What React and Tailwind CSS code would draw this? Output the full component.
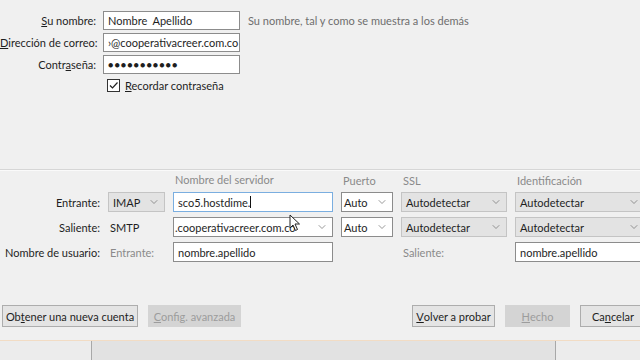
import { ChevronDown } from "lucide-react";

function Chev() {
  return <ChevronDown size={12} strokeWidth={1.4} className="text-[#6d6d6d] shrink-0" />;
}

function TextBox({ children, focused, h = "h-[20px]" }) {
  return (
    <div
      className={
        h +
        " bg-white flex items-center px-[4px] overflow-hidden whitespace-nowrap border " +
        (focused ? "border-[#7aaee0]" : "border-[#8c8c8c]")
      }
    >
      {children}
    </div>
  );
}

function GraySelect({ children }) {
  return (
    <div className="h-[20px] bg-[#e3e3e3] border border-[#c4c4c4] flex items-center justify-between pl-[4px] pr-[4px] whitespace-nowrap overflow-hidden">
      <span>{children}</span>
      <Chev />
    </div>
  );
}

function WhiteSelect({ children }) {
  return (
    <div className="h-[20px] bg-white border border-[#8c8c8c] flex items-center justify-between pl-[2px] pr-[4px] whitespace-nowrap overflow-hidden">
      <span>{children}</span>
      <Chev />
    </div>
  );
}

function Btn({ children, disabled, className = "" }) {
  return (
    <div
      className={
        "h-[22px] flex items-center justify-center px-[5px] whitespace-nowrap border " +
        (disabled
          ? "bg-[#d4d4d4] border-[#d4d4d4] text-[#9c9c9c] "
          : "bg-[#e4e4e4] border-[#adadad] text-[#1e1e1e] ") +
        className
      }
    >
      {children}
    </div>
  );
}

export default function App() {
  return (
    <div className="relative w-[640px] h-[360px] bg-[#f0f0f0] overflow-hidden flex flex-col font-['Lato',sans-serif] text-[11px] leading-none text-[#1e1e1e]">
      {/* Datos de la cuenta */}
      <div className="pt-[11px] grid grid-cols-[96px_137px_auto] gap-x-[7px] gap-y-[3px] items-center">
        <div className="text-right">
          <u>S</u>u nombre:
        </div>
        <TextBox h="h-[19px]">Nombre&nbsp; Apellido</TextBox>
        <div className="text-[#6e6e6e] pl-[1px] whitespace-nowrap">
          Su nombre, tal y como se muestra a los demás
        </div>

        <div className="text-right whitespace-nowrap">
          <u>D</u>irección de correo:
        </div>
        <TextBox h="h-[19px]">›@cooperativacreer.com.co</TextBox>
        <div />

        <div className="text-right">
          Contr<u>a</u>seña:
        </div>
        <TextBox h="h-[19px]">
          <span className="tracking-[1px] text-[9px]">●●●●●●●●●●●</span>
        </TextBox>
        <div />

        <div />
        <div className="flex items-center gap-[5px] pl-[4px] pt-[2px]">
          <div className="w-[13px] h-[13px] border border-[#333] bg-white flex items-center justify-center">
            <svg width="11" height="11" viewBox="0 0 11 11">
              <path d="M2 5.5 L4.5 8 L9.5 2.5" fill="none" stroke="#222" strokeWidth="1.2" />
            </svg>
          </div>
          <span className="whitespace-nowrap">
            <u>R</u>ecordar contraseña
          </span>
        </div>
        <div />
      </div>

      {/* Separador */}
      <div className="mt-[77px] border-t border-[#d6d6d6] border-b border-b-[#fafafa]" />

      {/* Servidores */}
      <div className="pt-[3px] grid grid-cols-[100px_57px_160px_52px_106px_130px] gap-x-[8px] gap-y-[5px] items-center">
        <div />
        <div />
        <div className="text-[#8a8a8a] pl-[2px] h-[13px]">Nombre del servidor</div>
        <div className="text-[#8a8a8a] pl-[2px]">Puerto</div>
        <div className="text-[#8a8a8a] pl-[2px]">SSL</div>
        <div className="text-[#8a8a8a] pl-[2px]">Identificación</div>

        <div className="text-right">Entrante:</div>
        <GraySelect>IMAP</GraySelect>
        <TextBox focused>
          sco5.hostdime.<span className="inline-block w-px h-[12px] bg-[#111]" />
        </TextBox>
        <WhiteSelect>Auto</WhiteSelect>
        <GraySelect>Autodetectar</GraySelect>
        <GraySelect>Autodetectar</GraySelect>

        <div className="text-right">Saliente:</div>
        <div className="pl-[2px]">SMTP</div>
        <div className="h-[20px] bg-white border border-[#8c8c8c] flex items-center justify-between pl-[1px] pr-[4px] whitespace-nowrap overflow-hidden">
          <span>.cooperativacreer.com.co</span>
          <Chev />
        </div>
        <WhiteSelect>Auto</WhiteSelect>
        <GraySelect>Autodetectar</GraySelect>
        <GraySelect>Autodetectar</GraySelect>

        <div className="text-right whitespace-nowrap">Nombre de usuario:</div>
        <div className="text-[#8a8a8a] pl-[2px]">Entrante:</div>
        <TextBox>nombre.apellido</TextBox>
        <div />
        <div className="text-[#8a8a8a] pl-[2px]">Saliente:</div>
        <TextBox>nombre.apellido</TextBox>
      </div>

      {/* Botones */}
      <div className="mt-[43px] flex items-center">
        <Btn className="ml-[2px] w-[136px]">
          Ob<u>t</u>ener una nueva cuenta
        </Btn>
        <Btn disabled className="ml-[10px] w-[93px]">
          <u>C</u>onfig. avanzada
        </Btn>
        <div className="flex-1" />
        <Btn className="w-[83px]">
          <u>V</u>olver a probar
        </Btn>
        <Btn disabled className="ml-[10px] w-[65px]">
          <u>H</u>echo
        </Btn>
        <Btn className="ml-[10px] w-[66px] -mr-[6px]">
          Ca<u>n</u>celar
        </Btn>
      </div>

      {/* Barra inferior */}
      <div className="mt-auto h-[20px] border-t border-[#f2dcc4] flex">
        <div className="w-[92px] bg-[#ececec] border-r border-[#a8a8a8]" />
        <div className="flex-1 bg-[#e2e2e2] border-r border-[#a8a8a8]" />
        <div className="w-[84px] bg-[#ececec]" />
      </div>

      {/* Cursor del ratón */}
      <svg className="absolute left-[289px] top-[214px]" width="12" height="18" viewBox="0 0 12 18">
        <path d="M1 1 L1 14 L4 11 L6.5 16.5 L8.5 15.5 L6 10 L10.5 10 Z" fill="#fff" stroke="#222" strokeWidth="1" />
      </svg>
    </div>
  );
}
